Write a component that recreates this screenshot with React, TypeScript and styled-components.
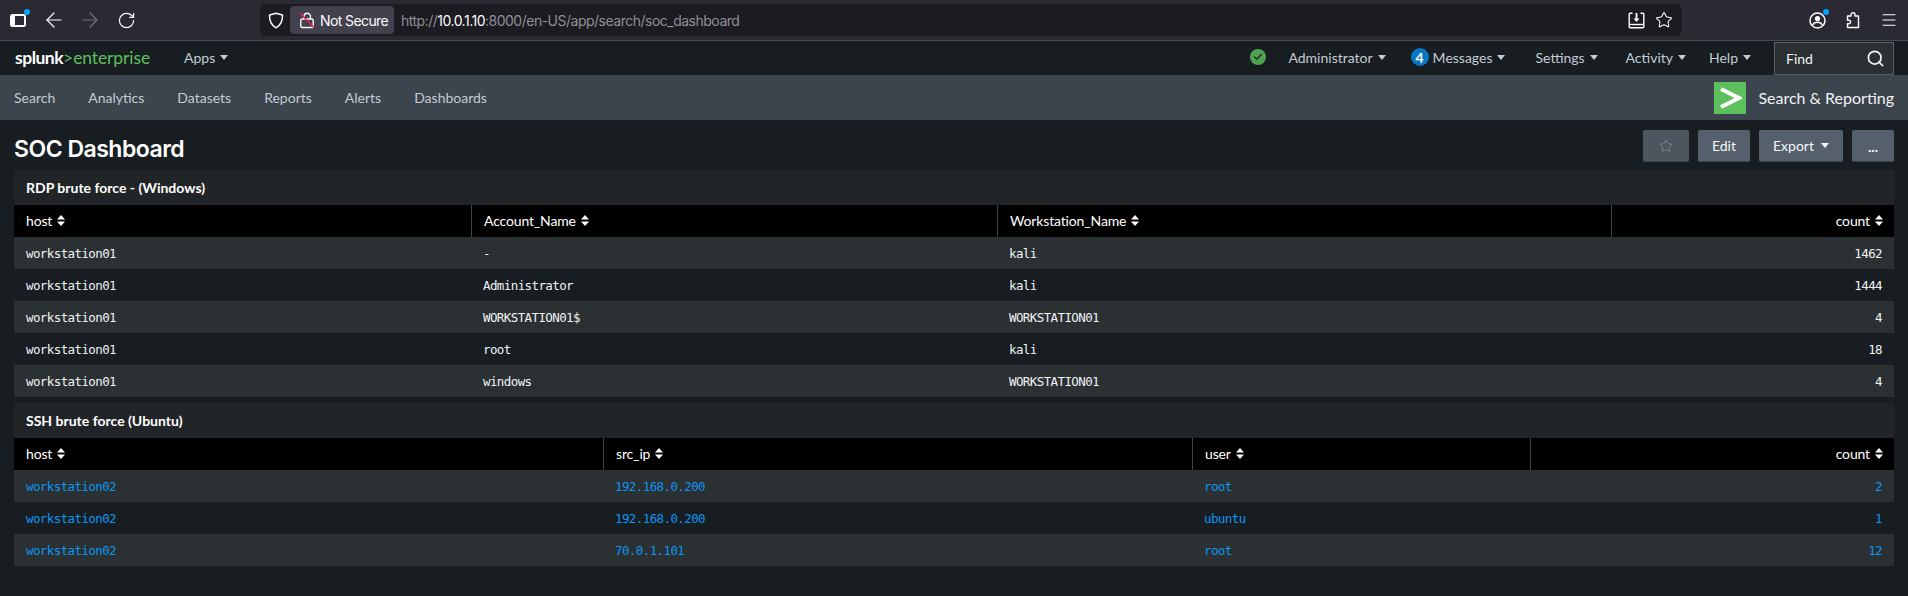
import React from 'react';
import styled, { createGlobalStyle } from 'styled-components';
import { ArrowLeft, ArrowRight, Check, Menu, RotateCw, Search, Star } from 'lucide-react';

const GlobalStyle = createGlobalStyle`
  html, body {
    margin: 0;
    padding: 0;
    background: #171d21;
    overflow: hidden;
  }
  * { box-sizing: border-box; }
`;

const UI_FONT = `'Lato', 'Open Sans', sans-serif`;
const MONO_FONT = `'DejaVu Sans Mono', 'Liberation Mono', monospace`;

const Page = styled.div`
  width: 1908px;
  height: 596px;
  background: #171d21;
  font-family: ${UI_FONT};
  display: flex;
  flex-direction: column;
`;

/* browser chrome */
const BrowserBar = styled.div`
  height: 41px;
  flex: none;
  background: #2b2a33;
  border-bottom: 1px solid #4a4950;
  display: flex;
  align-items: center;
  padding-left: 0;
`;

const ToolIcon = styled.div<{ $dim?: boolean }>`
  width: 36px;
  height: 32px;
  flex: none;
  position: relative;
  display: flex;
  align-items: center;
  justify-content: center;
  color: ${({ $dim }) => ($dim ? '#73727a' : '#fbfbfe')};
`;

const Dot = styled.span`
  position: absolute;
  top: 5px;
  right: 6px;
  width: 6px;
  height: 6px;
  border-radius: 50%;
  background: #00a6ff;
`;

const UrlBar = styled.div`
  width: 1422px;
  height: 32px;
  margin-left: 116px;
  margin-right: 117px;
  flex: none;
  border-radius: 6px;
  background: #1c1b22;
  display: flex;
  align-items: center;
  padding-left: 2px;
  padding-right: 4px;
`;

const ShieldSlot = styled.div`
  width: 28px;
  flex: none;
  display: flex;
  justify-content: center;
  color: #fbfbfe;
`;

const SecureChip = styled.div`
  width: 104px;
  height: 28px;
  flex: none;
  border-radius: 4px;
  background: #42414d;
  display: flex;
  align-items: center;
  gap: 5px;
  padding-left: 9px;
  color: #fbfbfe;
  font: 14px 'Inter', sans-serif;
  letter-spacing: -0.6px;
  white-space: nowrap;
`;

const UrlText = styled.div`
  flex: 1;
  padding-left: 7px;
  font: 14px 'Inter', sans-serif;
  letter-spacing: -0.5px;
  color: #8f8f94;
`;

const UrlHost = styled.span`
  color: #fbfbfe;
`;

const UrlActions = styled.div`
  display: flex;
  align-items: center;
`;

const UrlAction = styled.div`
  width: 28px;
  display: flex;
  justify-content: center;
  color: #fbfbfe;
`;

const BrowserRight = styled.div`
  display: flex;
  align-items: center;
`;

/* splunk top bar */
const TopBar = styled.div`
  height: 34px;
  flex: none;
  background: #171d21;
  display: flex;
  align-items: center;
  padding: 0 14px 0 15px;
`;

const Logo = styled.div`
  width: 135px;
  flex: none;
  font: 17.5px 'Lato', sans-serif;
  letter-spacing: -0.1px;
  color: #5cc05c;
  white-space: nowrap;
  padding-bottom: 2px;
`;

const LogoStrong = styled.span`
  color: #ffffff;
  font-weight: 700;
  letter-spacing: -0.5px;
`;

const TopMenu = styled.div<{ $left?: number }>`
  display: flex;
  align-items: center;
  gap: 5px;
  margin-left: ${({ $left }) => $left ?? 0}px;
  padding-bottom: 2px;
  color: #c3cbd4;
  font-size: 14px;
  white-space: nowrap;
`;

const Caret = styled.span`
  width: 0;
  height: 0;
  border-left: 4px solid transparent;
  border-right: 4px solid transparent;
  border-top: 5px solid #c3cbd4;
`;

const Spacer = styled.div`
  flex: 1;
`;

const StatusDot = styled.div`
  width: 16px;
  height: 16px;
  margin-bottom: 2px;
  border-radius: 50%;
  background: #4fa350;
  color: #171d21;
  display: flex;
  align-items: center;
  justify-content: center;
`;

const CountBadge = styled.span`
  width: 18px;
  height: 18px;
  border-radius: 50%;
  background: #0877c3;
  color: #ffffff;
  font-size: 14px;
  font-weight: 700;
  display: flex;
  align-items: center;
  justify-content: center;
  margin-right: -1px;
`;

const FindBox = styled.div`
  width: 120px;
  height: 33px;
  margin-left: 23px;
  margin-top: 1px;
  background: #2b3033;
  border: 1px solid #56606b;
  display: flex;
  align-items: center;
  justify-content: space-between;
  padding: 0 8px 0 11px;
  color: #f0f2f4;
  font-size: 14px;
`;

/* app nav */
const AppBar = styled.div`
  height: 45px;
  flex: none;
  background: #3c444d;
  display: flex;
  align-items: center;
  padding: 0 14px;
`;

const NavItem = styled.div`
  color: #c3cbd4;
  font-size: 14px;
  margin-right: 33px;
`;

const AppLogo = styled.div`
  width: 32px;
  height: 32px;
  flex: none;
  background: #5cc05c;
  display: flex;
  align-items: center;
  justify-content: center;
`;

const AppName = styled.div`
  margin-left: 12px;
  color: #f0f2f4;
  font-size: 16px;
  white-space: nowrap;
`;

/* dashboard */
const Content = styled.div`
  flex: 1;
  padding: 0 14px;
  display: flex;
  flex-direction: column;
`;

const TitleRow = styled.div`
  height: 50px;
  flex: none;
  display: flex;
  align-items: center;
  justify-content: space-between;
  padding-top: 8px;
`;

const Title = styled.h1`
  margin: 0;
  color: #ffffff;
  font-size: 23px;
  font-weight: 600;
  font-family: 'Inter', sans-serif;
  letter-spacing: -0.5px;
`;

const Buttons = styled.div`
  display: flex;
  gap: 9px;
  margin-top: -6px;
`;

const Button = styled.div<{ $width: number; $disabled?: boolean }>`
  width: ${({ $width }) => $width}px;
  height: 32px;
  background: ${({ $disabled }) => ($disabled ? '#4d555f' : '#56606c')};
  border-bottom: 1px solid #3c444d;
  border-radius: 2px;
  color: ${({ $disabled }) => ($disabled ? '#7f8894' : '#f5f7f8')};
  font-size: 14px;
  display: flex;
  align-items: center;
  justify-content: center;
  gap: 7px;
`;

const ButtonCaret = styled(Caret)`
  border-top-color: #f5f7f8;
`;

const MoreLabel = styled.span`
  font-weight: 900;
  padding-top: 2px;
`;

const Panel = styled.section`
  background: #212527;
  margin-bottom: 6px;
`;

const PanelTitle = styled.div`
  height: 35px;
  padding-left: 12px;
  display: flex;
  align-items: center;
  color: #ffffff;
  font-size: 14px;
  font-weight: 700;
`;

const Row = styled.div<{ $columns: string; $odd?: boolean; $head?: boolean }>`
  display: grid;
  grid-template-columns: ${({ $columns }) => $columns};
  height: 32px;
  background: ${({ $head, $odd }) => ($head ? '#000000' : $odd ? '#2b3033' : '#171d21')};
`;

const HeadCell = styled.div<{ $right?: boolean }>`
  display: flex;
  align-items: center;
  justify-content: ${({ $right }) => ($right ? 'flex-end' : 'flex-start')};
  gap: 5px;
  padding: 0 11px 2px 12px;
  color: #ffffff;
  font-size: 14px;
  letter-spacing: -0.15px;
  border-left: 1px solid #3c444d;
  &:first-child { border-left: 0; }
`;

const Cell = styled.div<{ $right?: boolean; $link?: boolean }>`
  display: flex;
  align-items: center;
  justify-content: ${({ $right }) => ($right ? 'flex-end' : 'flex-start')};
  padding: 1px 12px 0 12px;
  color: ${({ $link }) => ($link ? '#0d95f2' : '#f0f2f4')};
  font: 12.500px ${MONO_FONT};
  letter-spacing: -0.6px;
  white-space: pre;
`;

const SortIcon = () => (
  <svg width="8" height="11" viewBox="0 0 8 11" fill="#ffffff">
    <path d="M4 0 8 4.500H0Z" />
    <path d="M0 6.500H8L4 11Z" />
  </svg>
);

const BrowserIcons = {
  sidebar: (
    <svg width="18" height="18" viewBox="0 0 18 18" fill="none" stroke="currentColor">
      <rect x="2" y="4" width="14" height="11" rx="1.500" strokeWidth="2" />
      <path d="M2 5h4v9H2z" fill="currentColor" stroke="none" />
    </svg>
  ),
  shield: (
    <svg width="16" height="17" viewBox="0 0 16 17" fill="none" stroke="currentColor" strokeWidth="1.500">
      <path d="M8 1.200 14.500 3c.2 6-1.600 10.200-6.500 12.800C3.100 13.200 1.300 9 1.500 3Z" strokeLinejoin="round" />
    </svg>
  ),
  lock: (
    <svg width="16" height="18" viewBox="0 0 16 18" fill="none">
      <path d="M5 8V5.500a3.200 3.200 0 0 1 6.400 0V8" stroke="#fbfbfe" strokeWidth="1.400" />
      <rect x="1.800" y="8" width="12.400" height="8.500" rx="1.500" stroke="#fbfbfe" strokeWidth="1.400" />
      <path d="M1 2 14.500 16" stroke="#e22850" strokeWidth="1.700" />
    </svg>
  ),
  download: (
    <svg width="17" height="17" viewBox="0 0 17 17" fill="none" stroke="currentColor" strokeWidth="1.400">
      <path d="M4.500 1.200H2.200a1 1 0 0 0-1 1v12.600a1 1 0 0 0 1 1h12.600a1 1 0 0 0 1-1V2.200a1 1 0 0 0-1-1h-2.300" />
      <path d="M1.200 12.500h14.600" />
      <path d="M8.500 1v6.500" strokeWidth="1.800" />
      <path d="M5.500 6.500h6L8.500 10Z" fill="currentColor" stroke="none" />
    </svg>
  ),
  profile: (
    <svg width="17" height="17" viewBox="0 0 17 17" fill="none" stroke="currentColor" strokeWidth="1.500">
      <circle cx="8.500" cy="8.500" r="7.500" />
      <circle cx="8.500" cy="6.500" r="2.600" fill="currentColor" stroke="none" />
      <path d="M3.800 13c.8-2 2.500-2.800 4.700-2.800s3.900.8 4.700 2.800" />
    </svg>
  ),
  puzzle: (
    <svg width="16" height="17" viewBox="0 0 16 17" fill="none" stroke="currentColor" strokeWidth="1.400" strokeLinejoin="round">
      <path d="M6 4V2.800a2 2 0 0 1 4 0V4h3.500v11.500H2.500V11.800h1.300a1.800 1.800 0 0 0 0-3.600H2.500V4Z" />
    </svg>
  ),
};

type TableData = {
  title: string;
  columns: string;
  headers: string[];
  rows: string[][];
  link?: boolean;
};

const tables: TableData[] = [
  {
    title: 'RDP brute force - (Windows)',
    columns: '457px 526px 614px 283px',
    headers: ['host', 'Account_Name', 'Workstation_Name', 'count'],
    rows: [
      ['workstation01', '-', 'kali', '1462'],
      ['workstation01', 'Administrator', 'kali', '1444'],
      ['workstation01', 'WORKSTATION01$', 'WORKSTATION01', '4'],
      ['workstation01', 'root', 'kali', '18'],
      ['workstation01', 'windows', 'WORKSTATION01', '4'],
    ],
  },
  {
    title: 'SSH brute force (Ubuntu)',
    columns: '589px 589px 338px 364px',
    headers: ['host', 'src_ip', 'user', 'count'],
    rows: [
      ['workstation02', '192.168.0.200', 'root', '2'],
      ['workstation02', '192.168.0.200', 'ubuntu', '1'],
      ['workstation02', '70.0.1.101', 'root', '12'],
    ],
    link: true,
  },
];

const navItems = ['Search', 'Analytics', 'Datasets', 'Reports', 'Alerts', 'Dashboards'];

const StatTable: React.FC<TableData> = ({ title, columns, headers, rows, link }) => (
  <Panel>
    <PanelTitle>{title}</PanelTitle>
    <Row $columns={columns} $head>
      {headers.map((h, i) => (
        <HeadCell key={h} $right={i === headers.length - 1}>
          {h} <SortIcon />
        </HeadCell>
      ))}
    </Row>
    {rows.map((row, r) => (
      <Row key={r} $columns={columns} $odd={r % 2 === 0}>
        {row.map((value, c) => (
          <Cell key={c} $right={c === row.length - 1} $link={link}>
            {value}
          </Cell>
        ))}
      </Row>
    ))}
  </Panel>
);

export default function App() {
  return (
    <Page>
      <GlobalStyle />
      <BrowserBar>
        <ToolIcon>
          {BrowserIcons.sidebar}
          <Dot />
        </ToolIcon>
        <ToolIcon>
          <ArrowLeft size={24} strokeWidth={1.2} />
        </ToolIcon>
        <ToolIcon $dim>
          <ArrowRight size={24} strokeWidth={1.2} />
        </ToolIcon>
        <ToolIcon>
          <RotateCw size={19} strokeWidth={1.5} />
        </ToolIcon>
        <UrlBar>
          <ShieldSlot>{BrowserIcons.shield}</ShieldSlot>
          <SecureChip>
            {BrowserIcons.lock}
            Not Secure
          </SecureChip>
          <UrlText>
            http://<UrlHost>10.0.1.10</UrlHost>:8000/en-US/app/search/soc_dashboard
          </UrlText>
          <UrlActions>
            <UrlAction>{BrowserIcons.download}</UrlAction>
            <UrlAction>
              <Star size={18} strokeWidth={1.4} />
            </UrlAction>
          </UrlActions>
        </UrlBar>
        <BrowserRight>
          <ToolIcon>
            {BrowserIcons.profile}
            <Dot />
          </ToolIcon>
          <ToolIcon>{BrowserIcons.puzzle}</ToolIcon>
          <ToolIcon>
            <Menu size={18} strokeWidth={1.5} />
          </ToolIcon>
        </BrowserRight>
      </BrowserBar>

      <TopBar>
        <Logo>
          <LogoStrong>splunk</LogoStrong>&gt;enterprise
        </Logo>
        <TopMenu $left={34}>
          Apps <Caret />
        </TopMenu>
        <Spacer />
        <StatusDot>
          <Check size={10} strokeWidth={3} />
        </StatusDot>
        <TopMenu $left={22}>
          Administrator <Caret />
        </TopMenu>
        <TopMenu $left={25}>
          <CountBadge>4</CountBadge> Messages <Caret />
        </TopMenu>
        <TopMenu $left={30}>
          Settings <Caret />
        </TopMenu>
        <TopMenu $left={28}>
          Activity <Caret />
        </TopMenu>
        <TopMenu $left={23}>
          Help <Caret />
        </TopMenu>
        <FindBox>
          Find
          <Search size={19} strokeWidth={2.2} />
        </FindBox>
      </TopBar>

      <AppBar>
        {navItems.map((item) => (
          <NavItem key={item}>{item}</NavItem>
        ))}
        <Spacer />
        <AppLogo>
          <svg width="24" height="24" viewBox="0 0 24 24" fill="none" stroke="#ffffff" strokeWidth="4">
            <path d="M3 3 21 12 3 21" />
          </svg>
        </AppLogo>
        <AppName>Search &amp; Reporting</AppName>
      </AppBar>

      <Content>
        <TitleRow>
          <Title>SOC Dashboard</Title>
          <Buttons>
            <Button $width={46} $disabled>
              <Star size={14} strokeWidth={1.5} />
            </Button>
            <Button $width={52}>Edit</Button>
            <Button $width={84}>
              Export <ButtonCaret />
            </Button>
            <Button $width={42}>
              <MoreLabel>...</MoreLabel>
            </Button>
          </Buttons>
        </TitleRow>
        {tables.map((t) => (
          <StatTable key={t.title} {...t} />
        ))}
      </Content>
    </Page>
  );
}
